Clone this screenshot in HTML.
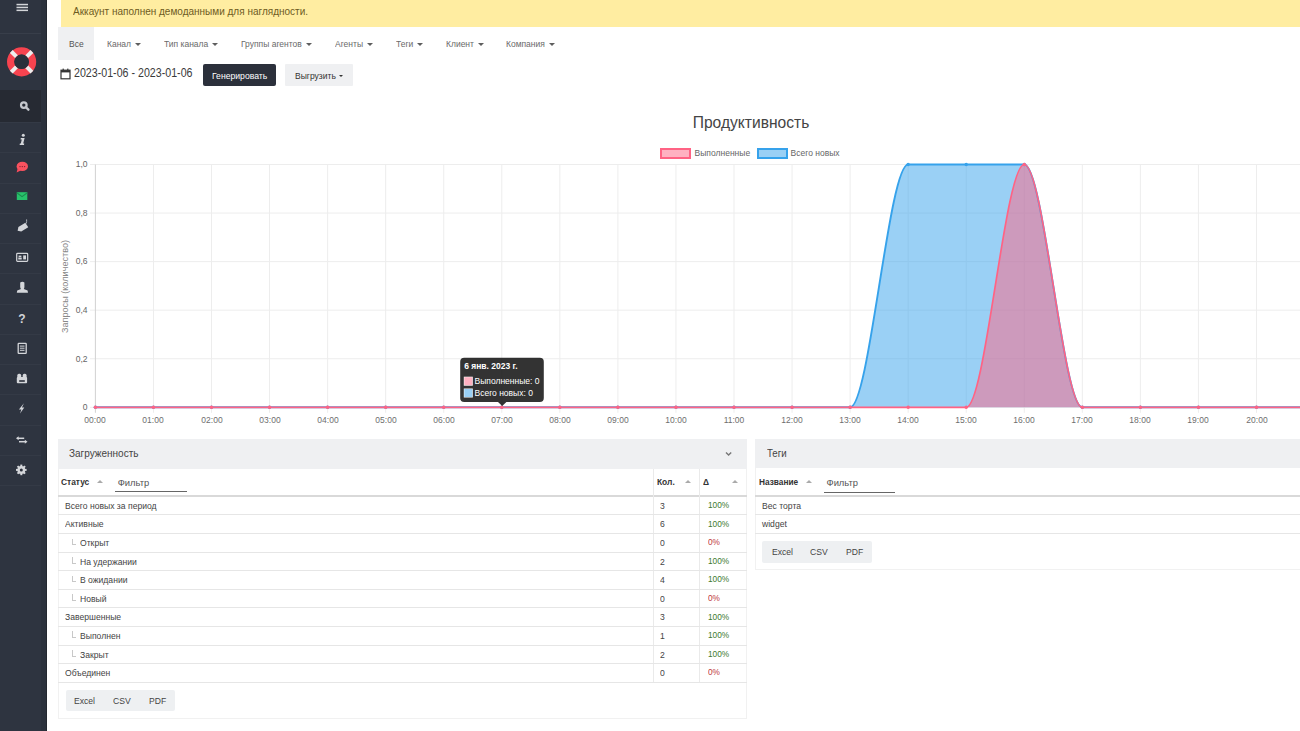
<!DOCTYPE html>
<html><head><meta charset="utf-8"><title>Отчёт</title>
<style>
html,body{margin:0;padding:0;width:1300px;height:731px;overflow:hidden;background:#fff;position:relative}
body{font-family:"Liberation Sans",sans-serif}
.t{position:absolute;line-height:1;white-space:nowrap}
</style></head><body>
<div style="position:absolute;left:0;top:0;width:46px;height:731px;background:#2e3440"></div>
<div style="position:absolute;left:40.5px;top:0;width:5px;height:731px;background:#2b313c"></div>
<div style="position:absolute;left:45.5px;top:0;width:1px;height:731px;background:#23272f"></div>
<div style="position:absolute;left:0;top:90px;width:40.5px;height:32px;background:#262a33"></div>
<div style="position:absolute;left:0;top:122.00px;width:40.5px;height:1px;background:#343a46"></div>
<div style="position:absolute;left:0;top:152.25px;width:40.5px;height:1px;background:#343a46"></div>
<div style="position:absolute;left:0;top:182.50px;width:40.5px;height:1px;background:#343a46"></div>
<div style="position:absolute;left:0;top:212.75px;width:40.5px;height:1px;background:#343a46"></div>
<div style="position:absolute;left:0;top:243.00px;width:40.5px;height:1px;background:#343a46"></div>
<div style="position:absolute;left:0;top:273.25px;width:40.5px;height:1px;background:#343a46"></div>
<div style="position:absolute;left:0;top:303.50px;width:40.5px;height:1px;background:#343a46"></div>
<div style="position:absolute;left:0;top:333.75px;width:40.5px;height:1px;background:#343a46"></div>
<div style="position:absolute;left:0;top:364.00px;width:40.5px;height:1px;background:#343a46"></div>
<div style="position:absolute;left:0;top:394.25px;width:40.5px;height:1px;background:#343a46"></div>
<div style="position:absolute;left:0;top:424.50px;width:40.5px;height:1px;background:#343a46"></div>
<div style="position:absolute;left:0;top:454.75px;width:40.5px;height:1px;background:#343a46"></div>
<div style="position:absolute;left:0;top:485.00px;width:40.5px;height:1px;background:#343a46"></div>
<div style="position:absolute;left:0;top:33px;width:40.5px;height:1px;background:#383e4a"></div>
<svg width="46" height="731" style="position:absolute;left:0;top:0"><rect x="16.5" y="3.8" width="11.5" height="1.5" fill="#d4d6da"/><rect x="16.5" y="6.7" width="11.5" height="1.5" fill="#d4d6da"/><rect x="16.5" y="9.6" width="11.5" height="1.5" fill="#d4d6da"/><circle cx="21.6" cy="61.8" r="10.95" fill="none" stroke="#f7434f" stroke-width="7.3"/><line x1="26.76" y1="66.96" x2="31.92" y2="72.12" stroke="#eeeeee" stroke-width="4"/><line x1="16.44" y1="66.96" x2="11.28" y2="72.12" stroke="#eeeeee" stroke-width="4"/><line x1="16.44" y1="56.64" x2="11.28" y2="51.48" stroke="#eeeeee" stroke-width="4"/><line x1="26.76" y1="56.64" x2="31.92" y2="51.48" stroke="#eeeeee" stroke-width="4"/><circle cx="21.6" cy="61.8" r="7.3" fill="#2a303b"/><circle cx="23.8" cy="105.1" r="2.8" fill="none" stroke="#c4c7cd" stroke-width="2.2"/><line x1="26.2" y1="107.5" x2="28.4" y2="109.7" stroke="#c4c7cd" stroke-width="2.4" stroke-linecap="round"/><circle cx="23.3" cy="135.2" r="1.5" fill="#d4d6da"/><path d="M20.8,138 L24.6,138 L23.2,143.6 L24.2,143.6 L24,145 L19.6,145 L19.9,143.6 L20.8,143.6 L21.8,139.4 L20.6,139.4 Z" fill="#d4d6da"/><ellipse cx="22.3" cy="166.4" rx="5.7" ry="4.7" fill="#f9525f"/><path d="M17.6,168.5 L16.6,172.6 L20.8,170.4 Z" fill="#f94b5c"/><circle cx="20" cy="166.6" r="0.7" fill="#7a2030"/><circle cx="22.3" cy="166.6" r="0.7" fill="#7a2030"/><circle cx="24.6" cy="166.6" r="0.7" fill="#7a2030"/><rect x="16.8" y="192.2" width="10.5" height="7.8" fill="#27c26b"/><path d="M16.8,192.8 L22.05,196.6 L27.3,192.8" fill="none" stroke="#1d8a4e" stroke-width="1.1"/><g transform="translate(22.2 227.8) rotate(-32) translate(-5.4 -2.7)"><path d="M0,2.7 L2.6,0 L10.8,0 L10.8,5.4 L2.6,5.4 Z" fill="#d4d6da"/></g><path d="M26.2,223.6 C26.6,222 26.8,220.8 26.6,219.4" fill="none" stroke="#a8adb5" stroke-width="1"/><rect x="16.7" y="253.4" width="11" height="8" rx="0.8" fill="none" stroke="#d4d6da" stroke-width="1.2"/><rect x="18.6" y="255.6" width="2.8" height="1.6" fill="#d4d6da"/><rect x="18.3" y="257.6" width="3.4" height="1.9" fill="#d4d6da"/><rect x="23.2" y="255.4" width="2.8" height="4" fill="#d4d6da"/><path d="M20.2,282.5 Q22.4,281.2 24.4,282.5 L24.4,287.2 Q24,288.6 23.8,289 L27.6,290.6 L28,292.8 L16.8,292.8 L17.2,290.6 L21,289 Q20.6,288.6 20.2,287.2 Z" fill="#d4d6da"/><text x="21.9" y="322.6" font-family="Liberation Sans" font-weight="bold" font-size="12" fill="#d4d6da" text-anchor="middle">?</text><rect x="18.2" y="343.4" width="8" height="10" rx="0.6" fill="none" stroke="#d4d6da" stroke-width="1.3"/><rect x="19.9" y="345.6" width="4.6" height="1" fill="#d4d6da"/><rect x="19.9" y="347.7" width="4.6" height="1" fill="#d4d6da"/><rect x="19.9" y="349.8" width="4.6" height="1" fill="#d4d6da"/><rect x="16.8" y="377" width="10.3" height="6.2" rx="1" fill="#d4d6da"/><rect x="17.3" y="373.8" width="3.9" height="4.5" rx="1.6" fill="#d4d6da"/><rect x="22.7" y="373.8" width="3.9" height="4.5" rx="1.6" fill="#d4d6da"/><rect x="19.2" y="380.2" width="5.6" height="1.6" fill="#2a2f3a"/><path d="M23.9,403.3 L18.9,409.4 L21.4,409.4 L20,413.6 L24.3,407.4 L21.9,407.4 Z" fill="#d4d6da"/><path d="M17.6,438.3 L24.2,438.3" stroke="#d4d6da" stroke-width="1.5"/><path d="M16,438.3 L18.6,436.3 L18.6,440.3 Z" fill="#d4d6da"/><path d="M19,441.7 L25.8,441.7" stroke="#d4d6da" stroke-width="1.5"/><path d="M27.5,441.7 L24.8,439.7 L24.8,443.7 Z" fill="#d4d6da"/><rect x="20.3" y="464.6" width="2" height="2.4" fill="#d4d6da" transform="rotate(0 21.3 469.9)"/><rect x="20.3" y="464.6" width="2" height="2.4" fill="#d4d6da" transform="rotate(45 21.3 469.9)"/><rect x="20.3" y="464.6" width="2" height="2.4" fill="#d4d6da" transform="rotate(90 21.3 469.9)"/><rect x="20.3" y="464.6" width="2" height="2.4" fill="#d4d6da" transform="rotate(135 21.3 469.9)"/><rect x="20.3" y="464.6" width="2" height="2.4" fill="#d4d6da" transform="rotate(180 21.3 469.9)"/><rect x="20.3" y="464.6" width="2" height="2.4" fill="#d4d6da" transform="rotate(225 21.3 469.9)"/><rect x="20.3" y="464.6" width="2" height="2.4" fill="#d4d6da" transform="rotate(270 21.3 469.9)"/><rect x="20.3" y="464.6" width="2" height="2.4" fill="#d4d6da" transform="rotate(315 21.3 469.9)"/><circle cx="21.3" cy="469.9" r="3.9" fill="#d4d6da"/><circle cx="21.3" cy="469.9" r="1.5" fill="#2a2f3a"/></svg>
<div style="position:absolute;left:61px;top:0;width:1239px;height:26.8px;background:#ffeda1"></div>
<div class="t" style="left:72.50px;top:6.49px;font-size:11.00px;color:#6e5b1f;font-weight:normal;transform:scaleX(0.9091);transform-origin:left 0;">Аккаунт наполнен демоданными для наглядности.</div>
<div style="position:absolute;left:57.6px;top:26.8px;width:36.7px;height:33.5px;background:#eff0f2"></div>
<div class="t" style="left:68.70px;top:40.29px;font-size:9.35px;color:#555;font-weight:normal;transform:scaleX(0.9091);transform-origin:left 0;">Все</div>
<div class="t" style="left:106.80px;top:40.29px;font-size:9.35px;color:#6a6a6a;font-weight:normal;transform:scaleX(0.9091);transform-origin:left 0;">Канал</div>
<div style="position:absolute;left:135.0px;top:43.2px;width:0;height:0;border-left:3px solid transparent;border-right:3px solid transparent;border-top:3.2px solid #5e5e5e"></div>
<div class="t" style="left:163.60px;top:40.29px;font-size:9.35px;color:#6a6a6a;font-weight:normal;transform:scaleX(0.9091);transform-origin:left 0;">Тип канала</div>
<div style="position:absolute;left:212.0px;top:43.2px;width:0;height:0;border-left:3px solid transparent;border-right:3px solid transparent;border-top:3.2px solid #5e5e5e"></div>
<div class="t" style="left:240.80px;top:40.29px;font-size:9.35px;color:#6a6a6a;font-weight:normal;transform:scaleX(0.9091);transform-origin:left 0;">Группы агентов</div>
<div style="position:absolute;left:305.7px;top:43.2px;width:0;height:0;border-left:3px solid transparent;border-right:3px solid transparent;border-top:3.2px solid #5e5e5e"></div>
<div class="t" style="left:334.90px;top:40.29px;font-size:9.35px;color:#6a6a6a;font-weight:normal;transform:scaleX(0.9091);transform-origin:left 0;">Агенты</div>
<div style="position:absolute;left:367.0px;top:43.2px;width:0;height:0;border-left:3px solid transparent;border-right:3px solid transparent;border-top:3.2px solid #5e5e5e"></div>
<div class="t" style="left:395.80px;top:40.29px;font-size:9.35px;color:#6a6a6a;font-weight:normal;transform:scaleX(0.9091);transform-origin:left 0;">Теги</div>
<div style="position:absolute;left:417.2px;top:43.2px;width:0;height:0;border-left:3px solid transparent;border-right:3px solid transparent;border-top:3.2px solid #5e5e5e"></div>
<div class="t" style="left:445.50px;top:40.29px;font-size:9.35px;color:#6a6a6a;font-weight:normal;transform:scaleX(0.9091);transform-origin:left 0;">Клиент</div>
<div style="position:absolute;left:477.6px;top:43.2px;width:0;height:0;border-left:3px solid transparent;border-right:3px solid transparent;border-top:3.2px solid #5e5e5e"></div>
<div class="t" style="left:506.00px;top:40.29px;font-size:9.35px;color:#6a6a6a;font-weight:normal;transform:scaleX(0.9091);transform-origin:left 0;">Компания</div>
<div style="position:absolute;left:549.0px;top:43.2px;width:0;height:0;border-left:3px solid transparent;border-right:3px solid transparent;border-top:3.2px solid #5e5e5e"></div>
<svg width="12" height="12" style="position:absolute;left:60.3px;top:67.8px"><rect x="1" y="2.2" width="9" height="8.6" fill="none" stroke="#333" stroke-width="1.2"/><rect x="1" y="2.2" width="9" height="2.2" fill="#333"/><rect x="2.6" y="0.6" width="1.2" height="2" fill="#333"/><rect x="7.2" y="0.6" width="1.2" height="2" fill="#333"/></svg>
<div class="t" style="left:73.50px;top:67.24px;font-size:12.47px;color:#3a3a3a;font-weight:normal;transform:scaleX(0.8547);transform-origin:left 0;">2023-01-06 - 2023-01-06</div>
<div style="position:absolute;left:202.5px;top:64px;width:73.3px;height:21.5px;background:#2b303b;border-radius:2px"></div>
<div class="t" style="left:211.50px;top:70.75px;font-size:9.50px;color:#fff;font-weight:normal;transform:scaleX(0.9091);transform-origin:left 0;">Генерировать</div>
<div style="position:absolute;left:284.8px;top:64px;width:68.6px;height:21.5px;background:#eff0f2;border-radius:1px"></div>
<div class="t" style="left:294.50px;top:70.85px;font-size:9.39px;color:#333;font-weight:normal;transform:scaleX(0.9091);transform-origin:left 0;">Выгрузить</div>
<div style="position:absolute;left:338.9px;top:74.6px;width:0;height:0;border-left:2.6px solid transparent;border-right:2.6px solid transparent;border-top:2.6px solid #333"></div>
<div style="position:absolute;left:57.5px;top:439.2px;width:689.5px;height:279.8px;box-sizing:border-box;border:1px solid #f1f1f1;background:#fff"></div>
<div style="position:absolute;left:57.5px;top:439.2px;width:689.5px;height:29.6px;background:#eff0f2"></div>
<div class="t" style="left:68.50px;top:447.99px;font-size:11.00px;color:#444;font-weight:normal;transform:scaleX(0.9091);transform-origin:left 0;">Загруженность</div>
<svg width="10" height="8" style="position:absolute;left:723.5px;top:450px"><path d="M2,2.4 L4.6,5 L7.2,2.4" fill="none" stroke="#777" stroke-width="1.4"/></svg>
<div class="t" style="left:61.30px;top:477.78px;font-size:9.24px;color:#333;font-weight:bold;transform:scaleX(0.9091);transform-origin:left 0;">Статус</div>
<div style="position:absolute;left:96.8px;top:480.4px;width:0;height:0;border-left:3.8px solid transparent;border-right:3.8px solid transparent;border-bottom:3.6px solid #aaa"></div>
<div class="t" style="left:117.70px;top:478.44px;font-size:9.40px;color:#555;font-weight:normal;">Фильтр</div>
<div style="position:absolute;left:114.7px;top:491.4px;width:72px;height:1px;background:#666"></div>
<div class="t" style="left:656.60px;top:477.78px;font-size:9.24px;color:#333;font-weight:bold;transform:scaleX(0.9091);transform-origin:left 0;">Кол.</div>
<div style="position:absolute;left:685.3px;top:480.4px;width:0;height:0;border-left:3.8px solid transparent;border-right:3.8px solid transparent;border-bottom:3.6px solid #aaa"></div>
<div class="t" style="left:702.80px;top:477.78px;font-size:9.24px;color:#333;font-weight:bold;transform:scaleX(0.9091);transform-origin:left 0;">Δ</div>
<div style="position:absolute;left:731.8px;top:480.4px;width:0;height:0;border-left:3.8px solid transparent;border-right:3.8px solid transparent;border-bottom:3.6px solid #aaa"></div>
<div style="position:absolute;left:57.5px;top:495.4px;width:689.5px;height:1.5px;background:#d9d9d9"></div>
<div style="position:absolute;left:652.6px;top:469px;width:1px;height:213px;background:#eaeaea"></div>
<div style="position:absolute;left:698.9px;top:469px;width:1px;height:213px;background:#eaeaea"></div>
<div class="t" style="left:65.30px;top:500.89px;font-size:9.46px;color:#444;font-weight:normal;transform:scaleX(0.9091);transform-origin:left 0;">Всего новых за период</div>
<div class="t" style="left:660.30px;top:500.89px;font-size:9.46px;color:#444;font-weight:normal;transform:scaleX(0.9091);transform-origin:left 0;">3</div>
<div class="t" style="left:707.60px;top:501.17px;font-size:9.13px;color:#3c7a2f;font-weight:normal;transform:scaleX(0.9091);transform-origin:left 0;">100%</div>
<div style="position:absolute;left:57.5px;top:514.48px;width:689.5px;height:1px;background:#e6e6e6"></div>
<div class="t" style="left:65.30px;top:519.47px;font-size:9.46px;color:#444;font-weight:normal;transform:scaleX(0.9091);transform-origin:left 0;">Активные</div>
<div class="t" style="left:660.30px;top:519.47px;font-size:9.46px;color:#444;font-weight:normal;transform:scaleX(0.9091);transform-origin:left 0;">6</div>
<div class="t" style="left:707.60px;top:519.75px;font-size:9.13px;color:#3c7a2f;font-weight:normal;transform:scaleX(0.9091);transform-origin:left 0;">100%</div>
<div style="position:absolute;left:57.5px;top:533.06px;width:689.5px;height:1px;background:#e6e6e6"></div>
<div style="position:absolute;left:71.8px;top:538.56px;width:3.5px;height:5.5px;border-left:1px solid #c8c8c8;border-bottom:1px solid #c8c8c8"></div>
<div class="t" style="left:80.30px;top:538.05px;font-size:9.46px;color:#444;font-weight:normal;transform:scaleX(0.9091);transform-origin:left 0;">Открыт</div>
<div class="t" style="left:660.30px;top:538.05px;font-size:9.46px;color:#444;font-weight:normal;transform:scaleX(0.9091);transform-origin:left 0;">0</div>
<div class="t" style="left:707.60px;top:538.33px;font-size:9.13px;color:#c0393b;font-weight:normal;transform:scaleX(0.9091);transform-origin:left 0;">0%</div>
<div style="position:absolute;left:57.5px;top:551.64px;width:689.5px;height:1px;background:#e6e6e6"></div>
<div style="position:absolute;left:71.8px;top:557.14px;width:3.5px;height:5.5px;border-left:1px solid #c8c8c8;border-bottom:1px solid #c8c8c8"></div>
<div class="t" style="left:80.30px;top:556.63px;font-size:9.46px;color:#444;font-weight:normal;transform:scaleX(0.9091);transform-origin:left 0;">На удержании</div>
<div class="t" style="left:660.30px;top:556.63px;font-size:9.46px;color:#444;font-weight:normal;transform:scaleX(0.9091);transform-origin:left 0;">2</div>
<div class="t" style="left:707.60px;top:556.91px;font-size:9.13px;color:#3c7a2f;font-weight:normal;transform:scaleX(0.9091);transform-origin:left 0;">100%</div>
<div style="position:absolute;left:57.5px;top:570.22px;width:689.5px;height:1px;background:#e6e6e6"></div>
<div style="position:absolute;left:71.8px;top:575.72px;width:3.5px;height:5.5px;border-left:1px solid #c8c8c8;border-bottom:1px solid #c8c8c8"></div>
<div class="t" style="left:80.30px;top:575.21px;font-size:9.46px;color:#444;font-weight:normal;transform:scaleX(0.9091);transform-origin:left 0;">В ожидании</div>
<div class="t" style="left:660.30px;top:575.21px;font-size:9.46px;color:#444;font-weight:normal;transform:scaleX(0.9091);transform-origin:left 0;">4</div>
<div class="t" style="left:707.60px;top:575.49px;font-size:9.13px;color:#3c7a2f;font-weight:normal;transform:scaleX(0.9091);transform-origin:left 0;">100%</div>
<div style="position:absolute;left:57.5px;top:588.80px;width:689.5px;height:1px;background:#e6e6e6"></div>
<div style="position:absolute;left:71.8px;top:594.30px;width:3.5px;height:5.5px;border-left:1px solid #c8c8c8;border-bottom:1px solid #c8c8c8"></div>
<div class="t" style="left:80.30px;top:593.79px;font-size:9.46px;color:#444;font-weight:normal;transform:scaleX(0.9091);transform-origin:left 0;">Новый</div>
<div class="t" style="left:660.30px;top:593.79px;font-size:9.46px;color:#444;font-weight:normal;transform:scaleX(0.9091);transform-origin:left 0;">0</div>
<div class="t" style="left:707.60px;top:594.07px;font-size:9.13px;color:#c0393b;font-weight:normal;transform:scaleX(0.9091);transform-origin:left 0;">0%</div>
<div style="position:absolute;left:57.5px;top:607.38px;width:689.5px;height:1px;background:#e6e6e6"></div>
<div class="t" style="left:65.30px;top:612.37px;font-size:9.46px;color:#444;font-weight:normal;transform:scaleX(0.9091);transform-origin:left 0;">Завершенные</div>
<div class="t" style="left:660.30px;top:612.37px;font-size:9.46px;color:#444;font-weight:normal;transform:scaleX(0.9091);transform-origin:left 0;">3</div>
<div class="t" style="left:707.60px;top:612.65px;font-size:9.13px;color:#3c7a2f;font-weight:normal;transform:scaleX(0.9091);transform-origin:left 0;">100%</div>
<div style="position:absolute;left:57.5px;top:625.96px;width:689.5px;height:1px;background:#e6e6e6"></div>
<div style="position:absolute;left:71.8px;top:631.46px;width:3.5px;height:5.5px;border-left:1px solid #c8c8c8;border-bottom:1px solid #c8c8c8"></div>
<div class="t" style="left:80.30px;top:630.95px;font-size:9.46px;color:#444;font-weight:normal;transform:scaleX(0.9091);transform-origin:left 0;">Выполнен</div>
<div class="t" style="left:660.30px;top:630.95px;font-size:9.46px;color:#444;font-weight:normal;transform:scaleX(0.9091);transform-origin:left 0;">1</div>
<div class="t" style="left:707.60px;top:631.23px;font-size:9.13px;color:#3c7a2f;font-weight:normal;transform:scaleX(0.9091);transform-origin:left 0;">100%</div>
<div style="position:absolute;left:57.5px;top:644.54px;width:689.5px;height:1px;background:#e6e6e6"></div>
<div style="position:absolute;left:71.8px;top:650.04px;width:3.5px;height:5.5px;border-left:1px solid #c8c8c8;border-bottom:1px solid #c8c8c8"></div>
<div class="t" style="left:80.30px;top:649.53px;font-size:9.46px;color:#444;font-weight:normal;transform:scaleX(0.9091);transform-origin:left 0;">Закрыт</div>
<div class="t" style="left:660.30px;top:649.53px;font-size:9.46px;color:#444;font-weight:normal;transform:scaleX(0.9091);transform-origin:left 0;">2</div>
<div class="t" style="left:707.60px;top:649.81px;font-size:9.13px;color:#3c7a2f;font-weight:normal;transform:scaleX(0.9091);transform-origin:left 0;">100%</div>
<div style="position:absolute;left:57.5px;top:663.12px;width:689.5px;height:1px;background:#e6e6e6"></div>
<div class="t" style="left:65.30px;top:668.11px;font-size:9.46px;color:#444;font-weight:normal;transform:scaleX(0.9091);transform-origin:left 0;">Объединен</div>
<div class="t" style="left:660.30px;top:668.11px;font-size:9.46px;color:#444;font-weight:normal;transform:scaleX(0.9091);transform-origin:left 0;">0</div>
<div class="t" style="left:707.60px;top:668.39px;font-size:9.13px;color:#c0393b;font-weight:normal;transform:scaleX(0.9091);transform-origin:left 0;">0%</div>
<div style="position:absolute;left:57.5px;top:681.70px;width:689.5px;height:1px;background:#e6e6e6"></div>
<div style="position:absolute;left:65.6px;top:690.2px;width:109.6px;height:21px;background:#eef0f2;border-radius:2px"></div>
<div class="t" style="left:74.20px;top:695.79px;font-size:9.46px;color:#444;font-weight:normal;transform:scaleX(0.9091);transform-origin:left 0;">Excel</div>
<div class="t" style="left:113.30px;top:695.79px;font-size:9.46px;color:#444;font-weight:normal;transform:scaleX(0.9091);transform-origin:left 0;">CSV</div>
<div class="t" style="left:149.10px;top:695.79px;font-size:9.46px;color:#444;font-weight:normal;transform:scaleX(0.9091);transform-origin:left 0;">PDF</div>
<div style="position:absolute;left:754.5px;top:439.2px;width:600px;height:130.40000000000003px;box-sizing:border-box;border:1px solid #f1f1f1;background:#fff"></div>
<div style="position:absolute;left:754.5px;top:439.2px;width:600px;height:29px;background:#eff0f2"></div>
<div class="t" style="left:766.50px;top:448.27px;font-size:10.67px;color:#444;font-weight:normal;transform:scaleX(0.9091);transform-origin:left 0;">Теги</div>
<div class="t" style="left:758.50px;top:477.87px;font-size:9.13px;color:#333;font-weight:bold;transform:scaleX(0.9091);transform-origin:left 0;">Название</div>
<div style="position:absolute;left:805.8px;top:480.4px;width:0;height:0;border-left:3.8px solid transparent;border-right:3.8px solid transparent;border-bottom:3.6px solid #aaa"></div>
<div class="t" style="left:826.50px;top:478.44px;font-size:9.40px;color:#555;font-weight:normal;">Фильтр</div>
<div style="position:absolute;left:823.5px;top:491.6px;width:71.6px;height:1px;background:#666"></div>
<div style="position:absolute;left:754.5px;top:495.4px;width:600px;height:1.5px;background:#d9d9d9"></div>
<div class="t" style="left:762.40px;top:500.89px;font-size:9.46px;color:#444;font-weight:normal;transform:scaleX(0.9091);transform-origin:left 0;">Вес торта</div>
<div style="position:absolute;left:754.5px;top:514.48px;width:600px;height:1px;background:#e6e6e6"></div>
<div class="t" style="left:762.40px;top:519.47px;font-size:9.46px;color:#444;font-weight:normal;transform:scaleX(0.9091);transform-origin:left 0;">widget</div>
<div style="position:absolute;left:754.5px;top:533.06px;width:600px;height:1px;background:#e6e6e6"></div>
<div style="position:absolute;left:762.4px;top:540.8px;width:109.6px;height:21.9px;background:#eef0f2;border-radius:2px"></div>
<div class="t" style="left:771.60px;top:546.84px;font-size:9.46px;color:#444;font-weight:normal;transform:scaleX(0.9091);transform-origin:left 0;">Excel</div>
<div class="t" style="left:810.40px;top:546.84px;font-size:9.46px;color:#444;font-weight:normal;transform:scaleX(0.9091);transform-origin:left 0;">CSV</div>
<div class="t" style="left:846.20px;top:546.84px;font-size:9.46px;color:#444;font-weight:normal;transform:scaleX(0.9091);transform-origin:left 0;">PDF</div>
<svg class="chart" width="1300" height="731" viewBox="0 0 1300 731" style="position:absolute;left:0;top:0">
<line x1="90" y1="407.30" x2="1440" y2="407.30" stroke="#ededed" stroke-width="1"/>
<line x1="90" y1="358.74" x2="1440" y2="358.74" stroke="#ededed" stroke-width="1"/>
<line x1="90" y1="310.18" x2="1440" y2="310.18" stroke="#ededed" stroke-width="1"/>
<line x1="90" y1="261.62" x2="1440" y2="261.62" stroke="#ededed" stroke-width="1"/>
<line x1="90" y1="213.06" x2="1440" y2="213.06" stroke="#ededed" stroke-width="1"/>
<line x1="90" y1="164.50" x2="1440" y2="164.50" stroke="#ededed" stroke-width="1"/>
<line x1="95.40" y1="164.50" x2="95.40" y2="412.80" stroke="#d2d2d2" stroke-width="1"/>
<line x1="153.46" y1="164.50" x2="153.46" y2="412.80" stroke="#ededed" stroke-width="1"/>
<line x1="211.51" y1="164.50" x2="211.51" y2="412.80" stroke="#ededed" stroke-width="1"/>
<line x1="269.56" y1="164.50" x2="269.56" y2="412.80" stroke="#ededed" stroke-width="1"/>
<line x1="327.62" y1="164.50" x2="327.62" y2="412.80" stroke="#ededed" stroke-width="1"/>
<line x1="385.67" y1="164.50" x2="385.67" y2="412.80" stroke="#ededed" stroke-width="1"/>
<line x1="443.73" y1="164.50" x2="443.73" y2="412.80" stroke="#ededed" stroke-width="1"/>
<line x1="501.78" y1="164.50" x2="501.78" y2="412.80" stroke="#ededed" stroke-width="1"/>
<line x1="559.84" y1="164.50" x2="559.84" y2="412.80" stroke="#ededed" stroke-width="1"/>
<line x1="617.89" y1="164.50" x2="617.89" y2="412.80" stroke="#ededed" stroke-width="1"/>
<line x1="675.95" y1="164.50" x2="675.95" y2="412.80" stroke="#ededed" stroke-width="1"/>
<line x1="734.00" y1="164.50" x2="734.00" y2="412.80" stroke="#ededed" stroke-width="1"/>
<line x1="792.06" y1="164.50" x2="792.06" y2="412.80" stroke="#ededed" stroke-width="1"/>
<line x1="850.12" y1="164.50" x2="850.12" y2="412.80" stroke="#ededed" stroke-width="1"/>
<line x1="908.17" y1="164.50" x2="908.17" y2="412.80" stroke="#ededed" stroke-width="1"/>
<line x1="966.23" y1="164.50" x2="966.23" y2="412.80" stroke="#ededed" stroke-width="1"/>
<line x1="1024.28" y1="164.50" x2="1024.28" y2="412.80" stroke="#ededed" stroke-width="1"/>
<line x1="1082.34" y1="164.50" x2="1082.34" y2="412.80" stroke="#ededed" stroke-width="1"/>
<line x1="1140.39" y1="164.50" x2="1140.39" y2="412.80" stroke="#ededed" stroke-width="1"/>
<line x1="1198.45" y1="164.50" x2="1198.45" y2="412.80" stroke="#ededed" stroke-width="1"/>
<line x1="1256.50" y1="164.50" x2="1256.50" y2="412.80" stroke="#ededed" stroke-width="1"/>
<line x1="1314.56" y1="164.50" x2="1314.56" y2="412.80" stroke="#ededed" stroke-width="1"/>
<line x1="1372.61" y1="164.50" x2="1372.61" y2="412.80" stroke="#ededed" stroke-width="1"/>
<line x1="1430.67" y1="164.50" x2="1430.67" y2="412.80" stroke="#ededed" stroke-width="1"/>
<path d="M95.40,407.30 C114.75,407.30 134.10,407.30 153.46,407.30 C172.81,407.30 192.16,407.30 211.51,407.30 C230.86,407.30 250.21,407.30 269.56,407.30 C288.92,407.30 308.27,407.30 327.62,407.30 C346.97,407.30 366.32,407.30 385.67,407.30 C405.03,407.30 424.38,407.30 443.73,407.30 C463.08,407.30 482.43,407.30 501.78,407.30 C521.14,407.30 540.49,407.30 559.84,407.30 C579.19,407.30 598.54,407.30 617.89,407.30 C637.25,407.30 656.60,407.30 675.95,407.30 C695.30,407.30 714.65,407.30 734.00,407.30 C753.36,407.30 772.71,407.30 792.06,407.30 C811.41,407.30 830.76,407.30 850.12,407.30 C869.47,407.30 888.82,164.50 908.17,164.50 C927.52,164.50 946.87,164.50 966.23,164.50 C985.58,164.50 1004.93,164.50 1024.28,164.50 C1043.63,164.50 1062.98,407.30 1082.34,407.30 C1101.69,407.30 1121.04,407.30 1140.39,407.30 C1159.74,407.30 1179.09,407.30 1198.45,407.30 C1217.80,407.30 1237.15,407.30 1256.50,407.30 C1275.85,407.30 1295.20,407.30 1314.56,407.30 C1333.91,407.30 1353.26,407.30 1372.61,407.30 C1391.96,407.30 1411.31,407.30 1430.67,407.30 L1430.67,407.3 L95.40,407.3 Z" fill="rgba(54,162,235,0.5)"/>
<path d="M95.40,407.30 C114.75,407.30 134.10,407.30 153.46,407.30 C172.81,407.30 192.16,407.30 211.51,407.30 C230.86,407.30 250.21,407.30 269.56,407.30 C288.92,407.30 308.27,407.30 327.62,407.30 C346.97,407.30 366.32,407.30 385.67,407.30 C405.03,407.30 424.38,407.30 443.73,407.30 C463.08,407.30 482.43,407.30 501.78,407.30 C521.14,407.30 540.49,407.30 559.84,407.30 C579.19,407.30 598.54,407.30 617.89,407.30 C637.25,407.30 656.60,407.30 675.95,407.30 C695.30,407.30 714.65,407.30 734.00,407.30 C753.36,407.30 772.71,407.30 792.06,407.30 C811.41,407.30 830.76,407.30 850.12,407.30 C869.47,407.30 888.82,407.30 908.17,407.30 C927.52,407.30 946.87,407.30 966.23,407.30 C985.58,407.30 1004.93,164.50 1024.28,164.50 C1043.63,164.50 1062.98,407.30 1082.34,407.30 C1101.69,407.30 1121.04,407.30 1140.39,407.30 C1159.74,407.30 1179.09,407.30 1198.45,407.30 C1217.80,407.30 1237.15,407.30 1256.50,407.30 C1275.85,407.30 1295.20,407.30 1314.56,407.30 C1333.91,407.30 1353.26,407.30 1372.61,407.30 C1391.96,407.30 1411.31,407.30 1430.67,407.30 L1430.67,407.3 L95.40,407.3 Z" fill="rgba(255,99,132,0.5)"/>
<path d="M95.40,407.30 C114.75,407.30 134.10,407.30 153.46,407.30 C172.81,407.30 192.16,407.30 211.51,407.30 C230.86,407.30 250.21,407.30 269.56,407.30 C288.92,407.30 308.27,407.30 327.62,407.30 C346.97,407.30 366.32,407.30 385.67,407.30 C405.03,407.30 424.38,407.30 443.73,407.30 C463.08,407.30 482.43,407.30 501.78,407.30 C521.14,407.30 540.49,407.30 559.84,407.30 C579.19,407.30 598.54,407.30 617.89,407.30 C637.25,407.30 656.60,407.30 675.95,407.30 C695.30,407.30 714.65,407.30 734.00,407.30 C753.36,407.30 772.71,407.30 792.06,407.30 C811.41,407.30 830.76,407.30 850.12,407.30 C869.47,407.30 888.82,164.50 908.17,164.50 C927.52,164.50 946.87,164.50 966.23,164.50 C985.58,164.50 1004.93,164.50 1024.28,164.50 C1043.63,164.50 1062.98,407.30 1082.34,407.30 C1101.69,407.30 1121.04,407.30 1140.39,407.30 C1159.74,407.30 1179.09,407.30 1198.45,407.30 C1217.80,407.30 1237.15,407.30 1256.50,407.30 C1275.85,407.30 1295.20,407.30 1314.56,407.30 C1333.91,407.30 1353.26,407.30 1372.61,407.30 C1391.96,407.30 1411.31,407.30 1430.67,407.30" fill="none" stroke="rgb(54,162,235)" stroke-width="1.9"/>
<circle cx="95.40" cy="407.30" r="1.7" fill="rgb(54,162,235)"/>
<circle cx="153.46" cy="407.30" r="1.7" fill="rgb(54,162,235)"/>
<circle cx="211.51" cy="407.30" r="1.7" fill="rgb(54,162,235)"/>
<circle cx="269.56" cy="407.30" r="1.7" fill="rgb(54,162,235)"/>
<circle cx="327.62" cy="407.30" r="1.7" fill="rgb(54,162,235)"/>
<circle cx="385.67" cy="407.30" r="1.7" fill="rgb(54,162,235)"/>
<circle cx="443.73" cy="407.30" r="1.7" fill="rgb(54,162,235)"/>
<circle cx="501.78" cy="407.30" r="1.7" fill="rgb(54,162,235)"/>
<circle cx="559.84" cy="407.30" r="1.7" fill="rgb(54,162,235)"/>
<circle cx="617.89" cy="407.30" r="1.7" fill="rgb(54,162,235)"/>
<circle cx="675.95" cy="407.30" r="1.7" fill="rgb(54,162,235)"/>
<circle cx="734.00" cy="407.30" r="1.7" fill="rgb(54,162,235)"/>
<circle cx="792.06" cy="407.30" r="1.7" fill="rgb(54,162,235)"/>
<circle cx="850.12" cy="407.30" r="1.7" fill="rgb(54,162,235)"/>
<circle cx="908.17" cy="164.50" r="1.7" fill="rgb(54,162,235)"/>
<circle cx="966.23" cy="164.50" r="1.7" fill="rgb(54,162,235)"/>
<circle cx="1024.28" cy="164.50" r="1.7" fill="rgb(54,162,235)"/>
<circle cx="1082.34" cy="407.30" r="1.7" fill="rgb(54,162,235)"/>
<circle cx="1140.39" cy="407.30" r="1.7" fill="rgb(54,162,235)"/>
<circle cx="1198.45" cy="407.30" r="1.7" fill="rgb(54,162,235)"/>
<circle cx="1256.50" cy="407.30" r="1.7" fill="rgb(54,162,235)"/>
<circle cx="1314.56" cy="407.30" r="1.7" fill="rgb(54,162,235)"/>
<circle cx="1372.61" cy="407.30" r="1.7" fill="rgb(54,162,235)"/>
<circle cx="1430.67" cy="407.30" r="1.7" fill="rgb(54,162,235)"/>
<path d="M95.40,407.30 C114.75,407.30 134.10,407.30 153.46,407.30 C172.81,407.30 192.16,407.30 211.51,407.30 C230.86,407.30 250.21,407.30 269.56,407.30 C288.92,407.30 308.27,407.30 327.62,407.30 C346.97,407.30 366.32,407.30 385.67,407.30 C405.03,407.30 424.38,407.30 443.73,407.30 C463.08,407.30 482.43,407.30 501.78,407.30 C521.14,407.30 540.49,407.30 559.84,407.30 C579.19,407.30 598.54,407.30 617.89,407.30 C637.25,407.30 656.60,407.30 675.95,407.30 C695.30,407.30 714.65,407.30 734.00,407.30 C753.36,407.30 772.71,407.30 792.06,407.30 C811.41,407.30 830.76,407.30 850.12,407.30 C869.47,407.30 888.82,407.30 908.17,407.30 C927.52,407.30 946.87,407.30 966.23,407.30 C985.58,407.30 1004.93,164.50 1024.28,164.50 C1043.63,164.50 1062.98,407.30 1082.34,407.30 C1101.69,407.30 1121.04,407.30 1140.39,407.30 C1159.74,407.30 1179.09,407.30 1198.45,407.30 C1217.80,407.30 1237.15,407.30 1256.50,407.30 C1275.85,407.30 1295.20,407.30 1314.56,407.30 C1333.91,407.30 1353.26,407.30 1372.61,407.30 C1391.96,407.30 1411.31,407.30 1430.67,407.30" fill="none" stroke="rgb(255,99,132)" stroke-width="1.7"/>
<circle cx="95.40" cy="407.30" r="1.7" fill="rgb(255,99,132)"/>
<circle cx="153.46" cy="407.30" r="1.7" fill="rgb(255,99,132)"/>
<circle cx="211.51" cy="407.30" r="1.7" fill="rgb(255,99,132)"/>
<circle cx="269.56" cy="407.30" r="1.7" fill="rgb(255,99,132)"/>
<circle cx="327.62" cy="407.30" r="1.7" fill="rgb(255,99,132)"/>
<circle cx="385.67" cy="407.30" r="1.7" fill="rgb(255,99,132)"/>
<circle cx="443.73" cy="407.30" r="1.7" fill="rgb(255,99,132)"/>
<circle cx="501.78" cy="407.30" r="1.7" fill="rgb(255,99,132)"/>
<circle cx="559.84" cy="407.30" r="1.7" fill="rgb(255,99,132)"/>
<circle cx="617.89" cy="407.30" r="1.7" fill="rgb(255,99,132)"/>
<circle cx="675.95" cy="407.30" r="1.7" fill="rgb(255,99,132)"/>
<circle cx="734.00" cy="407.30" r="1.7" fill="rgb(255,99,132)"/>
<circle cx="792.06" cy="407.30" r="1.7" fill="rgb(255,99,132)"/>
<circle cx="850.12" cy="407.30" r="1.7" fill="rgb(255,99,132)"/>
<circle cx="908.17" cy="407.30" r="1.7" fill="rgb(255,99,132)"/>
<circle cx="966.23" cy="407.30" r="1.7" fill="rgb(255,99,132)"/>
<circle cx="1024.28" cy="164.50" r="1.7" fill="rgb(255,99,132)"/>
<circle cx="1082.34" cy="407.30" r="1.7" fill="rgb(255,99,132)"/>
<circle cx="1140.39" cy="407.30" r="1.7" fill="rgb(255,99,132)"/>
<circle cx="1198.45" cy="407.30" r="1.7" fill="rgb(255,99,132)"/>
<circle cx="1256.50" cy="407.30" r="1.7" fill="rgb(255,99,132)"/>
<circle cx="1314.56" cy="407.30" r="1.7" fill="rgb(255,99,132)"/>
<circle cx="1372.61" cy="407.30" r="1.7" fill="rgb(255,99,132)"/>
<circle cx="1430.67" cy="407.30" r="1.7" fill="rgb(255,99,132)"/>
<rect x="460.2" y="357.8" width="83.6" height="44.2" rx="4" fill="rgba(0,0,0,0.8)"/>
<path d="M498.0,402 L502.2,406 L506.4,402 Z" fill="rgba(0,0,0,0.8)"/>
<rect x="463.8" y="376.7" width="9" height="9" fill="#fff"/><rect x="464.3" y="377.2" width="8" height="8" fill="rgba(255,99,132,0.5)"/>
<rect x="463.8" y="388.5" width="9" height="9" fill="#fff"/><rect x="464.3" y="389" width="8" height="8" fill="rgba(54,162,235,0.5)"/>
</svg>
<div class="t" style="left:-412.50px;width:500px;text-align:right;top:403.10px;font-size:8.50px;color:#666;font-weight:normal;">0</div>
<div class="t" style="left:-412.50px;width:500px;text-align:right;top:354.54px;font-size:8.50px;color:#666;font-weight:normal;">0,2</div>
<div class="t" style="left:-412.50px;width:500px;text-align:right;top:305.98px;font-size:8.50px;color:#666;font-weight:normal;">0,4</div>
<div class="t" style="left:-412.50px;width:500px;text-align:right;top:257.42px;font-size:8.50px;color:#666;font-weight:normal;">0,6</div>
<div class="t" style="left:-412.50px;width:500px;text-align:right;top:208.86px;font-size:8.50px;color:#666;font-weight:normal;">0,8</div>
<div class="t" style="left:-412.50px;width:500px;text-align:right;top:160.30px;font-size:8.50px;color:#666;font-weight:normal;">1,0</div>
<div class="t" style="left:-404.60px;width:1000px;text-align:center;top:415.99px;font-size:9.35px;color:#6e6e6e;font-weight:normal;transform:scaleX(0.9091);transform-origin:center 0;">00:00</div>
<div class="t" style="left:-346.54px;width:1000px;text-align:center;top:415.99px;font-size:9.35px;color:#6e6e6e;font-weight:normal;transform:scaleX(0.9091);transform-origin:center 0;">01:00</div>
<div class="t" style="left:-288.49px;width:1000px;text-align:center;top:415.99px;font-size:9.35px;color:#6e6e6e;font-weight:normal;transform:scaleX(0.9091);transform-origin:center 0;">02:00</div>
<div class="t" style="left:-230.44px;width:1000px;text-align:center;top:415.99px;font-size:9.35px;color:#6e6e6e;font-weight:normal;transform:scaleX(0.9091);transform-origin:center 0;">03:00</div>
<div class="t" style="left:-172.38px;width:1000px;text-align:center;top:415.99px;font-size:9.35px;color:#6e6e6e;font-weight:normal;transform:scaleX(0.9091);transform-origin:center 0;">04:00</div>
<div class="t" style="left:-114.33px;width:1000px;text-align:center;top:415.99px;font-size:9.35px;color:#6e6e6e;font-weight:normal;transform:scaleX(0.9091);transform-origin:center 0;">05:00</div>
<div class="t" style="left:-56.27px;width:1000px;text-align:center;top:415.99px;font-size:9.35px;color:#6e6e6e;font-weight:normal;transform:scaleX(0.9091);transform-origin:center 0;">06:00</div>
<div class="t" style="left:1.78px;width:1000px;text-align:center;top:415.99px;font-size:9.35px;color:#6e6e6e;font-weight:normal;transform:scaleX(0.9091);transform-origin:center 0;">07:00</div>
<div class="t" style="left:59.84px;width:1000px;text-align:center;top:415.99px;font-size:9.35px;color:#6e6e6e;font-weight:normal;transform:scaleX(0.9091);transform-origin:center 0;">08:00</div>
<div class="t" style="left:117.89px;width:1000px;text-align:center;top:415.99px;font-size:9.35px;color:#6e6e6e;font-weight:normal;transform:scaleX(0.9091);transform-origin:center 0;">09:00</div>
<div class="t" style="left:175.95px;width:1000px;text-align:center;top:415.99px;font-size:9.35px;color:#6e6e6e;font-weight:normal;transform:scaleX(0.9091);transform-origin:center 0;">10:00</div>
<div class="t" style="left:234.00px;width:1000px;text-align:center;top:415.99px;font-size:9.35px;color:#6e6e6e;font-weight:normal;transform:scaleX(0.9091);transform-origin:center 0;">11:00</div>
<div class="t" style="left:292.06px;width:1000px;text-align:center;top:415.99px;font-size:9.35px;color:#6e6e6e;font-weight:normal;transform:scaleX(0.9091);transform-origin:center 0;">12:00</div>
<div class="t" style="left:350.12px;width:1000px;text-align:center;top:415.99px;font-size:9.35px;color:#6e6e6e;font-weight:normal;transform:scaleX(0.9091);transform-origin:center 0;">13:00</div>
<div class="t" style="left:408.17px;width:1000px;text-align:center;top:415.99px;font-size:9.35px;color:#6e6e6e;font-weight:normal;transform:scaleX(0.9091);transform-origin:center 0;">14:00</div>
<div class="t" style="left:466.23px;width:1000px;text-align:center;top:415.99px;font-size:9.35px;color:#6e6e6e;font-weight:normal;transform:scaleX(0.9091);transform-origin:center 0;">15:00</div>
<div class="t" style="left:524.28px;width:1000px;text-align:center;top:415.99px;font-size:9.35px;color:#6e6e6e;font-weight:normal;transform:scaleX(0.9091);transform-origin:center 0;">16:00</div>
<div class="t" style="left:582.34px;width:1000px;text-align:center;top:415.99px;font-size:9.35px;color:#6e6e6e;font-weight:normal;transform:scaleX(0.9091);transform-origin:center 0;">17:00</div>
<div class="t" style="left:640.39px;width:1000px;text-align:center;top:415.99px;font-size:9.35px;color:#6e6e6e;font-weight:normal;transform:scaleX(0.9091);transform-origin:center 0;">18:00</div>
<div class="t" style="left:698.45px;width:1000px;text-align:center;top:415.99px;font-size:9.35px;color:#6e6e6e;font-weight:normal;transform:scaleX(0.9091);transform-origin:center 0;">19:00</div>
<div class="t" style="left:756.50px;width:1000px;text-align:center;top:415.99px;font-size:9.35px;color:#6e6e6e;font-weight:normal;transform:scaleX(0.9091);transform-origin:center 0;">20:00</div>
<div class="t" style="left:814.56px;width:1000px;text-align:center;top:415.99px;font-size:9.35px;color:#6e6e6e;font-weight:normal;transform:scaleX(0.9091);transform-origin:center 0;">21:00</div>
<div class="t" style="left:872.61px;width:1000px;text-align:center;top:415.99px;font-size:9.35px;color:#6e6e6e;font-weight:normal;transform:scaleX(0.9091);transform-origin:center 0;">22:00</div>
<div class="t" style="left:930.67px;width:1000px;text-align:center;top:415.99px;font-size:9.35px;color:#6e6e6e;font-weight:normal;transform:scaleX(0.9091);transform-origin:center 0;">23:00</div>
<div class="t" style="left:18.1px;top:281.9px;width:95px;font-size:9.15px;color:#888;text-align:center;transform:rotate(-90deg);transform-origin:47.5px 4.5px;">Запросы (количество)</div>
<div class="t" style="left:251.00px;width:1000px;text-align:center;top:114.59px;font-size:15.60px;color:#444;font-weight:normal;">Продуктивность</div>
<div style="position:absolute;left:660.2px;top:147.7px;width:26.8px;height:7.2px;border:2px solid rgb(255,99,132);background:rgba(255,99,132,0.5)"></div>
<div style="position:absolute;left:756.8px;top:147.7px;width:26.8px;height:7.2px;border:2px solid rgb(54,162,235);background:rgba(54,162,235,0.5)"></div>
<div class="t" style="left:694.60px;top:149.10px;font-size:8.50px;color:#666;font-weight:normal;">Выполненные</div>
<div class="t" style="left:790.60px;top:149.10px;font-size:8.50px;color:#666;font-weight:normal;">Всего новых</div>
<div class="t" style="left:464.20px;top:361.90px;font-size:8.50px;color:#fff;font-weight:bold;">6 янв. 2023 г.</div>
<div class="t" style="left:474.50px;top:376.60px;font-size:8.50px;color:#fff;font-weight:normal;">Выполненные: 0</div>
<div class="t" style="left:474.50px;top:388.60px;font-size:8.50px;color:#fff;font-weight:normal;">Всего новых: 0</div>

</body></html>
